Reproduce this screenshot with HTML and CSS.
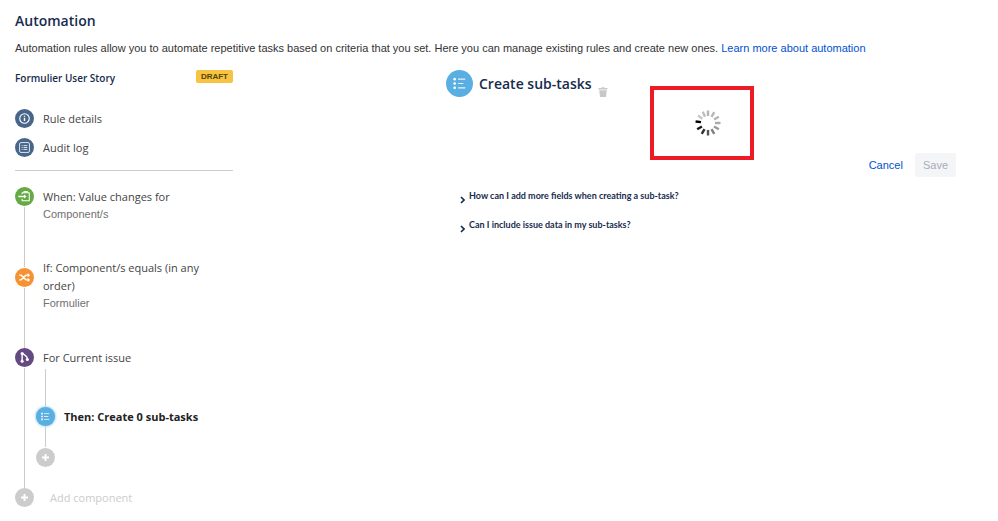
FILE: index.html
```html
<!DOCTYPE html>
<html lang="en">
<head>
  <meta charset="UTF-8" />
  <meta name="viewport" content="width=device-width, initial-scale=1.0"/>
  <title>Automation</title>
  <link rel="stylesheet" href="styles.css">
</head>
<body>

  <header>
    <h1>Automation</h1>
    <p>Automation rules allow you to automate repetitive tasks based on criteria that you set. Here you can manage existing rules and create new ones. <a href="#">Learn more about automation</a></p>
  </header>

  <div class="container">
    <aside class="sidebar">
      <div class="rule-name">
        <h2>Formulier User Story</h2>
        <span class="badge">DRAFT</span>
      </div>

      <nav>
        <a href="#">
          <svg class="icon navy" viewBox="0 0 20 20"><circle cx="10" cy="10" r="5" fill="none" stroke="#fff" stroke-width="1.2"/><path d="M10 9.3v3.4M10 7v1.2" stroke="#fff" stroke-width="1.5"/></svg>
          Rule details
        </a>
        <a href="#">
          <svg class="icon navy" viewBox="0 0 20 20"><rect x="4.8" y="4.8" width="10.4" height="10.4" rx="1.5" fill="none" stroke="#fff" stroke-opacity=".85"/><path d="M7 8h1M9 8h4M7 10h1M9 10h4M7 12h1M9 12h4" stroke="#fff" stroke-opacity=".85"/></svg>
          Audit log
        </a>
      </nav>

      <ol class="steps">
        <li class="step trigger">
          <div class="rail">
            <svg class="icon green" viewBox="0 0 20 20"><path d="M7.5 7.500V6h7.500v8.500H7.500V12.500" fill="none" stroke="#fff" stroke-width="1.100" stroke-linejoin="round"/><path d="M9 5h4.500" stroke="#fff" stroke-width="1.500"/><path d="M3.500 10h6" stroke="#fff" stroke-width="1.500"/><path d="M9.500 7.800 12.300 10l-2.800 2.200z" fill="#fff"/></svg>
            <span class="line"></span>
          </div>
          <div class="text">
            <h3>When: Value changes for</h3>
            <p>Component/s</p>
          </div>
        </li>
        <li class="step condition">
          <div class="rail">
            <span class="line lead"></span>
            <svg class="icon orange" viewBox="0 0 20 20"><path d="M4.500 7.500h2l5 5h2.500M4.500 12.500h2l5-5h2.500" fill="none" stroke="#fff" stroke-width="1.500"/><path d="M13.300 5.200 16 7.500l-2.700 2.300zM13.300 10.200l2.700 2.300-2.700 2.300z" fill="#fff"/></svg>
            <span class="line"></span>
          </div>
          <div class="text">
            <h3>If: Component/s equals (in any order)</h3>
            <p>Formulier</p>
          </div>
        </li>
        <li class="step">
          <div class="rail">
            <svg class="icon purple" viewBox="0 0 20 20"><path d="M7.500 6v8M8 5.500c2 3 5 2 5 6" fill="none" stroke="#fff" stroke-width="1.500"/><circle cx="7.500" cy="5.800" r="1.600" fill="#fff"/><circle cx="7.500" cy="14" r="1.600" fill="#fff"/><circle cx="13" cy="12" r="1.600" fill="#fff"/></svg>
            <span class="line"></span>
          </div>
          <div class="branch">
            <div class="text">
              <h3>For Current issue</h3>
            </div>
            <ol class="steps nested">
              <li class="step action">
                <div class="rail">
                  <span class="line"></span>
                  <svg class="icon blue selected" viewBox="0 0 20 20"><path d="M8.500 7H14M8.500 10H13M8.500 13H14" stroke="#fff" stroke-opacity=".8"/><path d="M5.500 7H7.200M5.500 10H7.200M5.500 13H7.200" stroke="#fff" stroke-width="1.700"/></svg>
                </div>
                <h3>Then: Create 0 sub-tasks</h3>
              </li>
              <li class="step add">
                <div class="rail">
                  <span class="line"></span>
                  <button type="button" class="icon grey" aria-label="Add">
                    <svg viewBox="0 0 20 20"><path d="M10 6.300v7.400M6.300 10h7.400" stroke="#fff" stroke-width="2"/></svg>
                  </button>
                </div>
              </li>
            </ol>
          </div>
        </li>
      </ol>
      <button type="button" class="add-component">
        <svg class="icon grey" viewBox="0 0 20 20"><path d="M10 6.300v7.400M6.300 10h7.400" stroke="#fff" stroke-width="2"/></svg>
        Add component
      </button>
    </aside>

    <main>
      <div class="editor">
        <div class="editor-title">
          <svg class="icon blue large" viewBox="0 0 28 28"><path d="M12.500 9.500H20M12.500 14H18M12.500 18.500H20" stroke="#fff" stroke-opacity=".85" stroke-width="1.200"/><circle cx="9" cy="9.500" r="1.400" fill="#fff"/><circle cx="9" cy="14" r="1.400" fill="#fff"/><circle cx="9" cy="18.500" r="1.400" fill="#fff"/></svg>
          <h2>Create sub-tasks</h2>
          <button type="button" class="delete" aria-label="Delete">
            <svg viewBox="0 0 10 10"><path d="M.5 1h3V.2h3V1h3v1.500h-9zM1.200 3.300h7.600L8 10H2z" fill="#c8c8c8"/></svg>
          </button>
        </div>
        <div class="loading">
          <svg viewBox="-13 -13 26 26" fill="none" stroke-width="2.400">
            <path d="M0-7V-12.500" stroke="#b4b4b4"/>
            <path d="M0-7V-12.500" stroke="#b8b8b8" transform="rotate(30)"/>
            <path d="M0-7V-12.500" stroke="#b4b4b4" transform="rotate(60)"/>
            <path d="M0-7V-12.500" stroke="#aaa" transform="rotate(90)"/>
            <path d="M0-7V-12.500" stroke="#999" transform="rotate(120)"/>
            <path d="M0-7V-12.500" stroke="#808080" transform="rotate(150)"/>
            <path d="M0-7V-12.500" stroke="#555" transform="rotate(180)"/>
            <path d="M0-7V-12.500" stroke="#333" transform="rotate(210)"/>
            <path d="M0-7V-12.500" stroke="#1a1a1a" transform="rotate(240)"/>
            <path d="M0-7V-12.500" stroke="#000" transform="rotate(277)"/>
            <path d="M0-7V-12.500" stroke="#c8c8c8" transform="rotate(307)"/>
            <path d="M0-7V-12.500" stroke="#bebebe" transform="rotate(335)"/>
          </svg>
        </div>
        <div class="actions">
          <a href="#">Cancel</a>
          <button type="button" class="save" disabled>Save</button>
        </div>
      </div>

      <div class="faq">
        <details>
          <summary><svg viewBox="0 0 5 8"><path d="M1 1l3 3-3 3" fill="none" stroke="#172b4d" stroke-width="1.600"/></svg>How can I add more fields when creating a sub-task?</summary>
        </details>
        <details>
          <summary><svg viewBox="0 0 5 8"><path d="M1 1l3 3-3 3" fill="none" stroke="#172b4d" stroke-width="1.600"/></svg>Can I include issue data in my sub-tasks?</summary>
        </details>
      </div>
    </main>
  </div>

</body>
</html>
```

FILE: styles.css
```css
* {
  box-sizing: border-box;
}
body {
  font-family: "Liberation Sans", Arial, sans-serif;
  font-size: 11px;
  margin: 0;
  padding: 12px 15px;
  background-color: white;
  color: #333;
}
h1, h2, h3 {
  font-family: "Open Sans", "Noto Sans", sans-serif;
  margin: 0;
  color: #172b4d;
}
p {
  margin: 0;
}
a {
  color: #0052cc;
  text-decoration: none;
}
button {
  font: inherit;
  border: none;
  background: none;
  padding: 0;
}
svg {
  display: block;
}
h1 {
  font-size: 14px;
  line-height: 18px;
  font-weight: 600;
}
header p {
  margin-top: 10px;
  line-height: 16px;
}
.container {
  display: flex;
  justify-content: space-between;
  margin-top: 14px;
}

/* round icons */
.icon {
  flex: none;
  width: 19px;
  height: 19px;
  border-radius: 50%;
}
.large {
  width: 27px;
  height: 27px;
}
.navy {
  background-color: #47668a;
}
.green {
  background-color: #65aa43;
}
.orange {
  background-color: #f79232;
}
.purple {
  background-color: #654982;
}
.blue {
  background-color: #59afe1;
}
.grey {
  background-color: #ccc;
}
.selected {
  box-shadow: 0 0 3px #59afe1;
}

/* sidebar */
.sidebar {
  width: 218px;
}
.rule-name {
  display: flex;
  justify-content: space-between;
  align-items: flex-start;
  height: 16px;
  margin-bottom: 23px;
}
.rule-name h2 {
  font-size: 10px;
  line-height: 16px;
  font-weight: 600;
}
.badge {
  padding: 0 5px;
  border-radius: 2px;
  background-color: #f6c342;
  color: #594300;
  font-size: 8px;
  line-height: 13px;
  font-weight: bold;
}
nav {
  display: flex;
  flex-direction: column;
  gap: 10px;
  padding-bottom: 13px;
  border-bottom: 1px solid #ccc;
}
nav a {
  display: flex;
  align-items: center;
  gap: 9px;
  color: #444;
  font-family: "Open Sans", "Noto Sans", sans-serif;
  font-size: 11px;
}
.steps {
  list-style: none;
  margin: 16px 0 0;
  padding: 0;
}
.step {
  display: flex;
  gap: 9px;
}
.rail {
  display: flex;
  flex-direction: column;
  align-items: center;
  gap: 1px;
  width: 19px;
}
.line {
  flex: 1;
  width: 1px;
  background-color: #ccc;
}
.lead {
  flex: none;
  height: 8px;
}
.trigger {
  height: 72px;
}
.condition {
  height: 89px;
}
.text {
  flex: 1;
}
.step h3 {
  color: #444;
  font-size: 11px;
  line-height: 19px;
  font-weight: normal;
}
.step p {
  color: #707070;
  line-height: 16px;
}
.condition h3 {
  line-height: 18px;
}
.branch {
  height: 140px;
}
.nested {
  margin: 2px 0 0 -7px;
}
.action {
  align-items: flex-end;
}
.action .rail {
  height: 57px;
}
.step.action h3 {
  color: #222;
  font-weight: bold;
}
.add .rail {
  height: 41px;
  padding-top: 1px;
}
.add-component {
  display: flex;
  align-items: center;
  gap: 16px;
  color: #ccc;
  font-family: "Open Sans", "Noto Sans", sans-serif;
  font-size: 11px;
}

/* rule editor */
main {
  flex: 1;
  margin-left: 213px;
  padding-right: 27px;
}
.editor {
  display: flex;
  align-items: flex-start;
}
.editor-title {
  display: flex;
  align-items: center;
  width: 204px;
}
.editor-title h2 {
  margin: 0 6px;
  font-size: 14px;
  font-weight: 600;
  white-space: nowrap;
}
.delete {
  align-self: flex-end;
}
.delete svg {
  width: 10px;
  height: 10px;
}
.loading {
  display: flex;
  justify-content: center;
  align-items: center;
  width: 104px;
  height: 74px;
  margin-top: 16px;
  padding-left: 12px;
  border: 4px solid #ed1c24;
}
.loading svg {
  width: 26px;
  height: 26px;
}
.actions {
  display: flex;
  align-items: center;
  gap: 12px;
  margin: 83px 0 0 auto;
}
.save {
  padding: 0 8px;
  border-radius: 2px;
  background-color: #f4f5f7;
  color: #a5adba;
  line-height: 24px;
}
.faq {
  display: flex;
  flex-direction: column;
  gap: 13px;
  margin: 11px 0 0 14px;
}
summary {
  display: flex;
  align-items: flex-end;
  gap: 4px;
  color: #172b4d;
  font-family: Lato, "Open Sans", sans-serif;
  font-size: 9px;
  line-height: 16px;
  font-weight: bold;
}
summary svg {
  width: 5px;
  height: 8px;
}
```
